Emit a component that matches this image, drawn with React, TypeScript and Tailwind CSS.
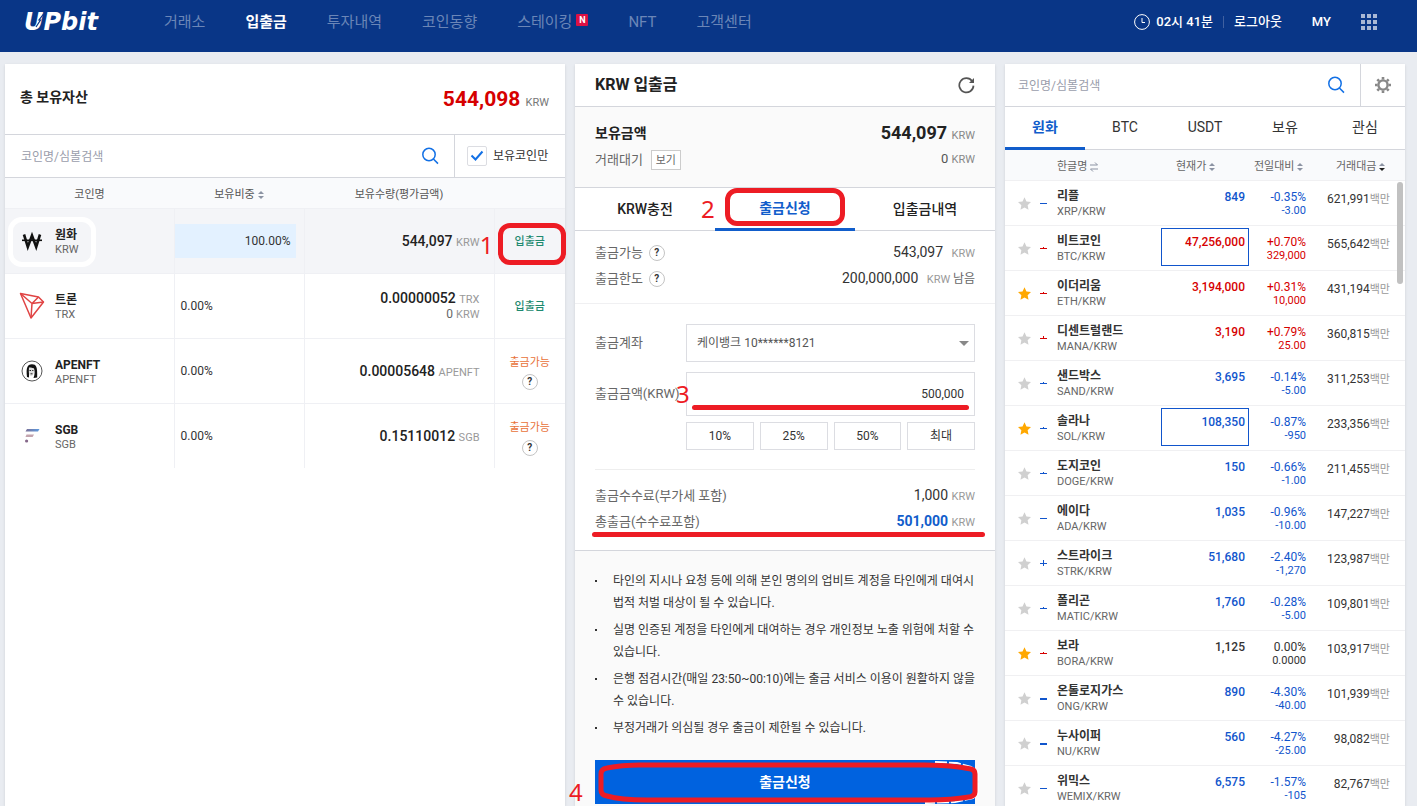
import React, { useState } from 'react';

const RED = '#ed1c24';

const menus = ['거래소', '입출금', '투자내역', '코인동향', '스테이킹', 'NFT', '고객센터'];

const assets = [
  { name: '원화', code: 'KRW', share: '100.00%', amount: '544,097', unit: 'KRW', deposit: true },
  { name: '트론', code: 'TRX', share: '0.00%', amount: '0.00000052', unit: 'TRX', value: '0', deposit: true },
  { name: 'APENFT', code: 'APENFT', share: '0.00%', amount: '0.00005648', unit: 'APENFT', deposit: false },
  { name: 'SGB', code: 'SGB', share: '0.00%', amount: '0.15110012', unit: 'SGB', deposit: false },
];

// candle: [top, bottom, thickness, colour]
const coins = [
  { name: '리플', code: 'XRP', price: '849', rate: '-0.35%', diff: '-3.00', volume: '621,991', candle: [0, 0, 1, 'down'] },
  { name: '비트코인', code: 'BTC', price: '47,256,000', rate: '+0.70%', diff: '329,000', volume: '565,642', candle: [1, 0, 1, 'up'], box: true },
  { name: '이더리움', code: 'ETH', price: '3,194,000', rate: '+0.31%', diff: '10,000', volume: '431,194', candle: [1, 0, 1, 'up'], star: true },
  { name: '디센트럴랜드', code: 'MANA', price: '3,190', rate: '+0.79%', diff: '25.00', volume: '360,815', candle: [2, 0, 1, 'up'] },
  { name: '샌드박스', code: 'SAND', price: '3,695', rate: '-0.14%', diff: '-5.00', volume: '311,253', candle: [1, 0, 1, 'down'] },
  { name: '솔라나', code: 'SOL', price: '108,350', rate: '-0.87%', diff: '-950', volume: '233,356', candle: [1, 0, 1, 'down'], star: true, box: true },
  { name: '도지코인', code: 'DOGE', price: '150', rate: '-0.66%', diff: '-1.00', volume: '211,455', candle: [1, 0, 1, 'down'] },
  { name: '에이다', code: 'ADA', price: '1,035', rate: '-0.96%', diff: '-10.00', volume: '147,227', candle: [0, 0, 1, 'down'] },
  { name: '스트라이크', code: 'STRK', price: '51,680', rate: '-2.40%', diff: '-1,270', volume: '123,987', candle: [3, 2, 1, 'down'] },
  { name: '폴리곤', code: 'MATIC', price: '1,760', rate: '-0.28%', diff: '-5.00', volume: '109,801', candle: [1, 0, 1, 'down'] },
  { name: '보라', code: 'BORA', price: '1,125', rate: '0.00%', diff: '0.0000', volume: '103,917', candle: [1, 0, 1, 'up'], star: true },
  { name: '온톨로지가스', code: 'ONG', price: '890', rate: '-4.30%', diff: '-40.00', volume: '101,939', candle: [0, 0, 2, 'down'] },
  { name: '누사이퍼', code: 'NU', price: '560', rate: '-4.27%', diff: '-25.00', volume: '98,082', candle: [0, 0, 2, 'down'] },
  { name: '위믹스', code: 'WEMIX', price: '6,575', rate: '-1.57%', diff: '-105', volume: '82,767', candle: [0, 0, 1, 'down'] },
];

const notices = [
  '타인의 지시나 요청 등에 의해 본인 명의의 업비트 계정을 타인에게 대여시 법적 처벌 대상이 될 수 있습니다.',
  '실명 인증된 계정을 타인에게 대여하는 경우 개인정보 노출 위험에 처할 수 있습니다.',
  '은행 점검시간(매일 23:50~00:10)에는 출금 서비스 이용이 원활하지 않을 수 있습니다.',
  '부정거래가 의심될 경우 출금이 제한될 수 있습니다.',
];

const SearchIcon = () => (
  <svg width="18" height="18" viewBox="0 0 18 18" fill="none" stroke="#1270e5" strokeWidth="1.5">
    <circle cx="8" cy="7.5" r="6.2" />
    <path d="M12.4 12 L17 16.6" />
  </svg>
);

const SortIcon = ({ active = false }) => (
  <svg width="6" height="8" viewBox="0 0 6 8" className="ml-[3px] inline-block">
    <path d="M0 3 L3 0 L6 3 Z" fill="#8c93a3" />
    <path d="M0 5 L3 8 L6 5 Z" fill={active ? '#222' : '#8c93a3'} />
  </svg>
);

const HelpButton = () => (
  <button
    aria-label="도움말"
    className="flex h-4 w-4 items-center justify-center rounded-full border border-[#c4c4c4] bg-white text-[10px] leading-none font-bold text-[#333]"
  >
    ?
  </button>
);

// 빨간 표시 테두리
const Mark = ({ className }) => (
  <span className={`pointer-events-none absolute z-10 rounded-[12px] border-5 border-[#ed1c24] ${className}`} />
);

const Step = ({ n, className }) => (
  <span
    className={`pointer-events-none absolute z-10 font-['Noto_Sans'] text-[24px] leading-6 font-normal text-[#ed1c24] ${className}`}
  >
    {n}
  </span>
);

const AssetIcon = ({ code }) => {
  if (code === 'KRW') {
    return (
      <svg width="26" height="26" viewBox="0 0 26 26" fill="none" stroke="#111">
        <path d="M5 6.5 L8.8 19 L13 7.5 L17.2 19 L21 6.5" strokeWidth="2.6" />
        <path d="M3 12.3 H23" strokeWidth="1.6" />
      </svg>
    );
  }
  if (code === 'TRX') {
    return (
      <svg width="26" height="28" viewBox="0 0 26 28" fill="none" stroke="#e04444" strokeWidth="1.5" strokeLinejoin="round">
        <path d="M1.5 1.5 L19.5 5 L24.5 10 L12 26 Z" />
        <path d="M1.5 1.5 L13 11.5 L24.5 10 M13 11.5 L12 26 M13 11.5 L19.5 5" />
      </svg>
    );
  }
  if (code === 'APENFT') {
    return (
      <svg width="24" height="24" viewBox="0 0 24 24">
        <circle cx="12" cy="12" r="10" fill="#fff" stroke="#555" />
        <path d="M7 18 C6 9 7 5.5 12 5.2 C16.5 5.2 17.5 8 17.2 18.5 L13.5 19 C15 15 14.8 12 14 9.5 C11 9 9.5 10 9 12 L9 18.5 Z" fill="#111" />
        <path d="M9 8.5 C12 8 14 9 14 12 C14 15 12.5 17 11 17 C9 17 8.5 14 9 8.5" fill="#ddd" />
        <path d="M9.5 11.5 H11 M12.2 11.5 H13.4 M10.5 14.8 H12.5" stroke="#222" strokeWidth="1" />
      </svg>
    );
  }
  return (
    <svg width="16" height="16" viewBox="0 0 16 16">
      <defs>
        <linearGradient id="sgb">
          <stop offset="0" stopColor="#7b6f96" />
          <stop offset="1" stopColor="#5b9be0" />
        </linearGradient>
      </defs>
      <path d="M3 1 H15.5 L14 3.5 H1.5 Z" fill="url(#sgb)" />
      <path d="M2.5 6.5 H10 L8.6 9 H1.5 Z" fill="#c3a4ae" />
      <circle cx="2.6" cy="13" r="1.6" fill="#86688a" />
    </svg>
  );
};

const Header = () => (
  <header className="flex h-[52px] shrink-0 items-center bg-[#093687] pr-10 pb-2 pl-6 whitespace-nowrap">
    <a href="#" className="relative mr-16 w-[76px] font-['DejaVu_Sans'] text-[24px] leading-7 font-bold text-white italic">
      UPbit
      <svg width="24" height="22" viewBox="0 0 24 22" className="absolute top-1 left-2">
        <path d="M4 15 L8.5 8 L7 8 L11.5 2" fill="none" stroke="#093687" strokeWidth="1.2" />
      </svg>
    </a>
    <nav className="flex gap-10 text-[15px]">
      {menus.map((menu) => (
        <a key={menu} href="#" className={`flex ${menu === '입출금' ? 'font-bold text-white' : 'text-[#6b86b7]'}`}>
          {menu}
          {menu === '스테이킹' && (
            <span className="mt-[3px] ml-1 h-3 w-3 rounded-[1px] bg-[#dd1144] text-center text-[9px] leading-3 font-bold text-white">
              N
            </span>
          )}
        </a>
      ))}
    </nav>
    <div className="ml-auto flex items-center text-[13px] font-medium text-white">
      <svg width="16" height="16" viewBox="0 0 16 16" fill="none" stroke="#fff" className="mr-[6px]">
        <circle cx="8" cy="8" r="7.4" />
        <path d="M8 4 V8.5 H11" />
      </svg>
      <span>02시 41분</span>
      <span className="mx-[10px] h-3 w-px bg-[#3f60a0]" />
      <a href="#">로그아웃</a>
      <a href="#" className="mx-[30px]">MY</a>
      <button aria-label="메뉴" className="grid grid-cols-3 gap-[2px]">
        {Array.from({ length: 9 }, (_, i) => (
          <span key={i} className="h-1 w-1 bg-[#a9b8d5]" />
        ))}
      </button>
    </div>
  </header>
);

const AssetPanel = () => {
  const [onlyOwned, setOnlyOwned] = useState(true);

  return (
    <section className="bg-white shadow-sm">
      <div className="flex h-[70px] items-center justify-between pr-4 pl-[15px]">
        <h2 className="pb-1 text-[14px] font-bold text-[#222]">총 보유자산</h2>
        <p className="pt-[2px] text-[21px] font-bold text-[#d60000]">
          544,098 <span className="text-[11px] font-normal text-[#777]">KRW</span>
        </p>
      </div>
      <div className="flex h-11 border-y border-[#d4d6dc]">
        <div className="flex flex-1 items-center pr-[15px] pl-4">
          <input
            aria-label="코인 검색"
            placeholder="코인명/심볼검색"
            className="min-w-0 flex-1 pt-[2px] text-[12px] outline-none placeholder:text-[#9a9dab]"
          />
          <button aria-label="검색"><SearchIcon /></button>
        </div>
        <label className="flex w-[111px] items-center border-l border-[#d4d6dc] pl-3 text-[12px] text-[#333]">
          <span className="relative mr-[6px] h-5 w-5">
            <input
              type="checkbox"
              checked={onlyOwned}
              onChange={(e) => setOnlyOwned(e.target.checked)}
              className="block h-5 w-5 appearance-none rounded-[2px] border border-[#dcdde2]"
            />
            {onlyOwned && (
              <svg width="20" height="20" viewBox="0 0 20 20" className="pointer-events-none absolute inset-0">
                <path d="M4.5 9.5 L8.5 13.5 L15.5 5.5" fill="none" stroke="#1270e5" strokeWidth="2" />
              </svg>
            )}
          </span>
          보유코인만
        </label>
      </div>

      <table className="w-full table-fixed border-collapse">
        <colgroup>
          <col />
          <col className="w-[130px]" />
          <col className="w-[190px]" />
          <col className="w-[71px]" />
        </colgroup>
        <thead>
          <tr className="h-[30px] border-b border-[#eff0f4] bg-[#f9fafc] text-[11px] text-[#555]">
            <th className="pt-1 font-normal">코인명</th>
            <th className="pt-1 font-normal">보유비중<SortIcon /></th>
            <th className="pt-1 font-normal">보유수량(평가금액)</th>
            <th />
          </tr>
        </thead>
        <tbody>
          {assets.map((a, i) => (
            <tr
              key={a.code}
              className={`h-[65px] ${i === 0 ? 'bg-[#f4f5f8]' : ''} ${i < 3 ? 'border-b border-[#eff0f4]' : ''}`}
            >
              <td className="relative">
                {i === 0 && (
                  <span className="pointer-events-none absolute top-2 left-[3px] h-[50px] w-[88px] rounded-[14px] border-5 border-white" />
                )}
                <div className="flex items-center">
                  <span className="ml-3 flex w-[30px] justify-center"><AssetIcon code={a.code} /></span>
                  <span className="ml-2 pt-[3px] text-[12px] leading-[14px]">
                    <strong className="block font-bold text-[#222]">{a.name}</strong>
                    <span className="text-[11px] text-[#666]">{a.code}</span>
                  </span>
                </div>
              </td>
              <td className="border-l border-[#eff0f4] text-[12px] text-[#333]">
                {i === 0 ? (
                  <div className="mr-2 h-[34px] bg-[#e3f1ff] pr-[5px] text-right leading-[34px]">{a.share}</div>
                ) : (
                  <div className="pl-[6px]">{a.share}</div>
                )}
              </td>
              <td className="relative border-l border-[#eff0f4] pr-[14px] text-right leading-[15px]">
                <div className="pt-[2px] text-[14px] font-medium text-[#222]">
                  {a.amount} <span className="text-[11px] font-normal text-[#999]">{a.unit}</span>
                </div>
                {a.value && (
                  <div className="text-[12px] text-[#666]">
                    {a.value} <span className="text-[11px] text-[#999]">KRW</span>
                  </div>
                )}
                {i === 0 && <Step n={1} className="right-0 top-6" />}
              </td>
              <td className="relative border-l border-[#eff0f4] text-[11px]">
                {a.deposit ? (
                  <button className="block w-full pt-1 text-center font-medium text-[#1f8a70]">입출금</button>
                ) : (
                  <div className="flex flex-col items-center gap-[3px] pt-1 text-[#e8723a]">
                    출금가능
                    <HelpButton />
                  </div>
                )}
                {i === 0 && <Mark className="top-[14px] left-[3px] h-[42px] w-[68px]" />}
              </td>
            </tr>
          ))}
        </tbody>
      </table>
    </section>
  );
};

const TransferPanel = () => {
  const [amount, setAmount] = useState('500,000');

  return (
    <section className="bg-[#fafafa] shadow-sm">
      <div className="flex h-[43px] items-center justify-between border-b border-[#d4d6dc] bg-white px-5">
        <h2 className="text-[16px] font-bold text-[#222]">KRW 입출금</h2>
        <button aria-label="새로고침">
          <svg width="17" height="17" viewBox="0 0 17 17" fill="none" stroke="#555" strokeWidth="1.7">
            <path d="M14.2 4.2 A7.1 7.1 0 1 0 15.5 8.6" />
            <path d="M16 1 V6 H11 Z" fill="#555" stroke="none" />
          </svg>
        </button>
      </div>
      <div className="flex h-[81px] justify-between border-b border-[#d4d6dc] px-5 pt-4">
        <div>
          <strong className="block text-[14px] leading-5 text-[#222]">보유금액</strong>
          <p className="mt-[7px] flex items-center text-[13px] leading-5 text-[#666]">
            거래대기
            <button className="ml-2 h-5 w-[30px] border border-[#ccc] bg-white text-[11px] leading-none">보기</button>
          </p>
        </div>
        <div className="text-right text-[#222]">
          <p className="h-5 text-[18px] leading-5 font-bold">
            544,097 <span className="text-[11px] font-normal text-[#888]">KRW</span>
          </p>
          <p className="mt-[6px] h-5 text-[13px] leading-5 text-[#555]">
            0 <span className="text-[11px] text-[#888]">KRW</span>
          </p>
        </div>
      </div>
      <div className="relative flex h-[43px] border-b border-[#d4d6dc] bg-white text-[14px] font-medium text-[#222]">
        <button className="flex-1">KRW충전</button>
        <button className="relative -mb-px flex-1 border-b-3 border-[#115dcb] font-bold text-[#115dcb]">
          출금신청
          <Mark className="top-0 left-[10px] h-[38px] w-[120px]" />
          <Step n={2} className="top-[9px] -left-[14px]" />
        </button>
        <button className="flex-1">입출금내역</button>
      </div>

      <div className="flex flex-col gap-[6px] border-b border-[#f0f0f2] bg-white px-5 pt-3 pb-[14px] text-[13px] leading-5 text-[#666]">
        <div className="flex h-5 items-center justify-between">
          <span className="flex items-center gap-[6px]">출금가능 <HelpButton /></span>
          <span className="text-[14px] text-[#333]">543,097 <span className="ml-[5px] text-[11px] text-[#999]">KRW</span></span>
        </div>
        <div className="flex h-5 items-center justify-between">
          <span className="flex items-center gap-[6px]">출금한도 <HelpButton /></span>
          <span className="text-[14px] text-[#333]">
            200,000,000 <span className="ml-[5px] text-[11px] text-[#999]">KRW <span className="text-[12px] text-[#666]">남음</span></span>
          </span>
        </div>
      </div>

      <div className="border-b border-[#d4d6dc] bg-white px-5 pt-5 text-[13px] text-[#666]">
        <div className="flex h-[38px] items-center">
          <label htmlFor="account" className="w-[91px] shrink-0">출금계좌</label>
          <div className="relative flex-1">
            <select
              id="account"
              className="block h-[38px] w-full appearance-none border border-[#dcdde2] bg-white pl-[10px] text-[12px] text-[#555] outline-none"
            >
              <option>케이뱅크 10******8121</option>
            </select>
            <svg width="10" height="5" viewBox="0 0 10 5" className="pointer-events-none absolute top-[17px] right-[6px]">
              <path d="M0 0 H10 L5 5 Z" fill="#888" />
            </svg>
          </div>
        </div>
        <div className="relative mt-[10px] flex h-11 items-center">
          <label htmlFor="amount" className="w-[91px] shrink-0 whitespace-nowrap">출금금액(KRW)</label>
          <input
            id="amount"
            value={amount}
            onChange={(e) => setAmount(e.target.value)}
            className="h-11 min-w-0 flex-1 border border-[#dcdde2] pr-[10px] text-right text-[12px] text-[#333] outline-none"
          />
          <Step n={3} className="top-[10px] left-[81px]" />
          <span className="pointer-events-none absolute right-[6px] bottom-[6px] left-[97px] h-[5px] rounded-full bg-[#ed1c24]" />
        </div>
        <div className="mt-[6px] ml-[91px] grid grid-cols-4 gap-[6px] text-[12px] text-[#333]">
          {['10%', '25%', '50%', '최대'].map((rate) => (
            <button key={rate} className="h-7 border border-[#dcdde2]">{rate}</button>
          ))}
        </div>
        <div className="relative mt-[19px] border-t border-[#eeeeee] pt-4 pb-[18px] leading-5">
          <div className="flex h-5 items-center justify-between">
            <span>출금수수료(부가세 포함)</span>
            <span className="text-[14px] text-[#333]">1,000 <span className="text-[11px] text-[#999]">KRW</span></span>
          </div>
          <div className="mt-[6px] flex h-5 items-center justify-between">
            <span>총출금(수수료포함)</span>
            <span className="text-[14px] font-bold text-[#115dcb]">
              501,000 <span className="text-[11px] font-normal text-[#999]">KRW</span>
            </span>
          </div>
          <span className="pointer-events-none absolute -right-[10px] bottom-[13px] -left-[3px] h-[5px] rounded-full bg-[#ed1c24]" />
        </div>
      </div>

      <div className="px-5 pt-[19px]">
        <ul className="flex flex-col gap-[5px] text-[12px] leading-[22px] break-keep text-[#333]">
          {notices.map((notice) => (
            <li key={notice} className="flex">
              <span className="mt-[10px] mr-4 h-[2px] w-[2px] shrink-0 bg-[#333]" />
              {notice}
            </li>
          ))}
        </ul>
        <button className="relative mt-[21px] block h-11 w-full bg-[#0062df] text-[14px] font-bold text-white">
          출금신청
          <svg
            viewBox="0 0 380 44"
            preserveAspectRatio="none"
            fill="none"
            className="pointer-events-none absolute inset-0 h-full w-full overflow-visible"
          >
            <path d="M340 2 L362 3 L376 7 L383 12 V34 L378 38 L360 42 L330 43" stroke="#fff" strokeWidth="2" strokeDasharray="12 2" />
            <path
              d="M44 5 H330 C352 5 366 7 376 9 Q380 10 380 14 V32 Q380 36 374 37 C362 39 350 40 335 40 H52 C36 40 22 39 12 36 Q6 35 6 30 V14 Q6 9 12 8 C22 6 32 5 44 5 Z"
              stroke={RED}
              strokeWidth="5"
            />
          </svg>
          <Step n={4} className="top-5 -left-[26px]" />
        </button>
      </div>
    </section>
  );
};

const priceColor = (rate) => {
  if (rate.startsWith('+')) return 'text-[#d60000]';
  if (rate.startsWith('-')) return 'text-[#1155cc]';
  return 'text-[#333]';
};

const Candle = ({ candle }) => {
  const [top, bottom, thick, dir] = candle;
  const color = dir === 'up' ? '#d60000' : '#1155cc';
  return (
    <svg width="7" height="11" viewBox="0 0 7 11" className="block">
      <rect x="0" y="5" width="7" height={thick} fill={color} />
      <rect x="3" y={5 - top} width="1" height={top + bottom + 1} fill={color} />
    </svg>
  );
};

const MarketPanel = () => {
  const [tab, setTab] = useState('원화');

  return (
    <section className="flex min-h-0 flex-col bg-white shadow-sm">
      <div className="flex h-[43px] shrink-0 border-b border-[#d4d6dc]">
        <div className="flex flex-1 items-center pr-[15px] pl-[13px]">
          <input
            aria-label="마켓 검색"
            placeholder="코인명/심볼검색"
            className="min-w-0 flex-1 pt-[2px] text-[12px] outline-none placeholder:text-[#9a9dab]"
          />
          <button aria-label="검색"><SearchIcon /></button>
        </div>
        <button aria-label="설정" className="flex w-[45px] items-center justify-center border-l border-[#d4d6dc]">
          <svg width="16" height="16" viewBox="0 0 16 16" fill="none" stroke="#888">
            <circle cx="8" cy="8" r="4.6" strokeWidth="2.4" />
            <path
              d="M8 0 V2.5 M8 13.5 V16 M0 8 H2.5 M13.5 8 H16 M2.3 2.3 L4.1 4.1 M11.9 11.9 L13.7 13.7 M2.3 13.7 L4.1 11.9 M11.9 4.1 L13.7 2.3"
              strokeWidth="2.6"
            />
          </svg>
        </button>
      </div>
      <div className="flex h-[43px] shrink-0 border-b border-[#d4d6dc] text-[14px] text-[#333]">
        {['원화', 'BTC', 'USDT', '보유', '관심'].map((t) => (
          <button
            key={t}
            onClick={() => setTab(t)}
            className={`-mb-px flex-1 border-b-3 ${tab === t ? 'border-[#115dcb] font-bold text-[#115dcb]' : 'border-transparent'}`}
          >
            {t}
          </button>
        ))}
      </div>

      <div className="relative min-h-0 flex-1 overflow-hidden">
        <span className="absolute top-8 right-[2px] h-[102px] w-[6px] rounded-full bg-[#c1c1c1]" />
        <table className="w-full table-fixed border-collapse">
          <colgroup>
            <col className="w-[35px]" />
            <col className="w-[17px]" />
            <col />
            <col className="w-[88px]" />
            <col className="w-[65px]" />
            <col className="w-[91px]" />
          </colgroup>
          <thead>
            <tr className="h-[30px] border-b border-[#f0f0f2] bg-[#f9fafc] text-left text-[11px] text-[#666]">
              <th />
              <th />
              <th className="pt-1 font-normal">
                한글명
                <svg width="8" height="10" viewBox="0 0 8 10" fill="none" stroke="#8c93a3" className="ml-[3px] inline-block">
                  <path d="M0 3 H7.5 L5 0.5 M8 7 H0.5 L3 9.5" />
                </svg>
              </th>
              <th className="pt-1 pl-[15px] font-normal">현재가<SortIcon /></th>
              <th className="pt-1 pl-[5px] font-normal">전일대비<SortIcon /></th>
              <th className="pt-1 pl-[22px] font-normal">거래대금<SortIcon active /></th>
            </tr>
          </thead>
          <tbody>
            {coins.map((c) => (
              <tr key={c.code} className="h-[45px] border-b border-[#f0f0f2] align-top text-[12px] leading-[15px]">
                <td className="pt-4 pl-[13px]">
                  <button aria-label={`${c.name} 관심`} className="block">
                    <svg width="13" height="13" viewBox="0 0 24 24" fill={c.star ? '#ffa800' : '#d0d0d0'}>
                      <path d="M12 0.5 L15.6 8.2 L24 9.2 L17.8 15 L19.4 23.4 L12 19.2 L4.6 23.4 L6.2 15 L0 9.2 L8.4 8.2 Z" />
                    </svg>
                  </button>
                </td>
                <td className="pt-[17px]"><Candle candle={c.candle} /></td>
                <td className="pt-2">
                  <strong className="block font-bold text-[#333]">{c.name}</strong>
                  <span className="text-[11px] text-[#666]">{c.code}/KRW</span>
                </td>
                <td className="pt-[2px]">
                  <div
                    className={`h-[38px] border pt-[6px] pr-[3px] text-right font-medium ${c.box ? 'border-[#1155cc]' : 'border-transparent'} ${priceColor(c.rate)}`}
                  >
                    {c.price}
                  </div>
                </td>
                <td className={`pt-[9px] pr-2 text-right ${priceColor(c.rate)}`}>
                  {c.rate}
                  <span className="block text-[11px] leading-3">{c.diff}</span>
                </td>
                <td className="pt-[11px] pr-[15px] text-right text-[#333]">
                  {c.volume}<span className="text-[11px] text-[#999]">백만</span>
                </td>
              </tr>
            ))}
          </tbody>
        </table>
      </div>
    </section>
  );
};

const App = () => {
  return (
    <div className="flex h-screen flex-col overflow-hidden bg-[#e9ecf1] font-['Roboto','Noto_Sans_CJK_KR',sans-serif]">
      <Header />
      <main className="grid min-h-0 flex-1 grid-cols-[56fr_42fr_40fr] grid-rows-[minmax(0,1fr)] gap-[10px] pt-3 pr-3 pl-[5px]">
        <AssetPanel />
        <TransferPanel />
        <MarketPanel />
      </main>
    </div>
  );
};

export default App;
